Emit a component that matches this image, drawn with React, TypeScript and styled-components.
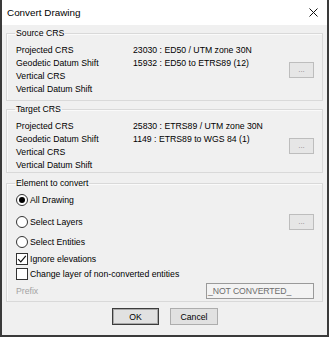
import React from "react";
import styled, { createGlobalStyle } from "styled-components";

const Global = createGlobalStyle`
  html, body { margin: 0; padding: 0; background: #ffffff; }
  body { font-family: "Liberation Sans", Arial, sans-serif; }
  * { box-sizing: border-box; }
`;

const Window = styled.div`
  width: 329px;
  height: 337px;
  border: 2px solid #3a3a3a;
  border-top: none;
  background: #f0f0f0;
  display: flex;
  flex-direction: column;
  font-family: "Liberation Sans", Arial, sans-serif;
  font-size: 8.7px;
  color: #000;
`;

const TitleBar = styled.div`
  height: 25px;
  background: #ffffff;
  display: flex;
  align-items: center;
  justify-content: space-between;
  padding: 0 9px 0 5px;
  flex-shrink: 0;
`;

const Title = styled.span`
  font-size: 9.9px;
  color: #000;
`;

const Body = styled.div`
  flex: 1;
  display: flex;
  flex-direction: column;
  padding: 2px 4px 0 4px;
`;

const Group = styled.fieldset<{ $mt: number; $pt: number; $pb: number }>`
  margin: ${(p) => p.$mt}px 0 0 0;
  padding: ${(p) => p.$pt}px 8px ${(p) => p.$pb}px 9px;
  border: 1px solid #d9d9d9;
  box-shadow: inset 1px 1px 0 #fafafa;
  min-inline-size: 0;
`;

const Legend = styled.legend`
  padding: 0 1px;
  margin-left: -1px;
  line-height: 13px;
  height: 13px;
`;

const CrsGrid = styled.div`
  display: grid;
  grid-template-columns: 117px 1fr 25px;
  grid-auto-rows: 13px;
  line-height: 13px;
`;

const Cell = styled.span<{ $col: number; $row: number }>`
  grid-column: ${(p) => p.$col};
  grid-row: ${(p) => p.$row};
  white-space: nowrap;
`;

const DotsButton = styled.button<{ $span?: boolean }>`
  width: 25px;
  height: 16px;
  padding: 0;
  margin: 0;
  border: 1px solid #bdbdbd;
  background: #e6e6e6;
  color: #8a8a8a;
  font-family: "Liberation Sans", Arial, sans-serif;
  font-size: 8px;
  line-height: 10px;
  display: flex;
  align-items: center;
  justify-content: center;
  ${(p) => (p.$span ? "grid-column: 3; grid-row: 2 / 4; align-self: center;" : "")}
`;

const Options = styled.div`
  display: flex;
  flex-direction: column;
`;

const OptRow = styled.div<{ $h: number; $mt?: number }>`
  height: ${(p) => p.$h}px;
  margin-top: ${(p) => p.$mt ?? 0}px;
  display: flex;
  align-items: center;
  justify-content: space-between;
  white-space: nowrap;
`;

const OptLabel = styled.label<{ $disabled?: boolean }>`
  display: flex;
  align-items: center;
  gap: 2px;
  color: ${(p) => (p.$disabled ? "#a3a3a3" : "#000")};
`;

const RadioCircle = styled.span<{ $on?: boolean }>`
  width: 12px;
  height: 12px;
  border-radius: 50%;
  border: 1px solid #333;
  background: #fff;
  display: inline-flex;
  align-items: center;
  justify-content: center;
  &::after {
    content: "";
    width: 6px;
    height: 6px;
    border-radius: 50%;
    background: ${(p) => (p.$on ? "#000" : "transparent")};
  }
`;

const CheckBox = styled.span`
  width: 12px;
  height: 12px;
  border: 1px solid #333;
  background: #fff;
  display: inline-flex;
  align-items: center;
  justify-content: center;
`;

const TextField = styled.div`
  width: 108px;
  height: 16px;
  border: 1px solid #9a9a9a;
  background: #f3f3f3;
  color: #6d6d6d;
  padding-left: 1px;
  display: flex;
  align-items: center;
  font-size: 8.7px;
  letter-spacing: -0.1px;
`;

const Footer = styled.div`
  display: flex;
  justify-content: center;
  gap: 11px;
  margin-top: 6px;
  padding-left: 1px;
`;

const DialogButton = styled.button<{ $default?: boolean; $w: number }>`
  width: ${(p) => p.$w}px;
  height: 17px;
  margin: 0;
  padding: 0;
  background: #e1e1e1;
  border: 1px solid ${(p) => (p.$default ? "#3c3c3c" : "#adadad")};
  box-shadow: ${(p) => (p.$default ? "inset 0 0 0 1px #a8a8a8" : "none")};
  font-family: "Liberation Sans", Arial, sans-serif;
  font-size: 8.7px;
  color: #000;
`;

const CloseIcon = () => (
  <svg width="9" height="9" viewBox="0 0 9 9" aria-hidden="true">
    <path d="M0.5 0.5 L8.5 8.5 M8.5 0.5 L0.5 8.5" stroke="#111" strokeWidth="1" />
  </svg>
);

const CheckMark = () => (
  <svg width="10" height="10" viewBox="0 0 10 10" aria-hidden="true">
    <path d="M1.2 5.2 L3.8 7.8 L8.8 1.8" fill="none" stroke="#111" strokeWidth="1.2" />
  </svg>
);

type CrsProps = { projected: string; shift: string };

const CrsRows = ({ projected, shift }: CrsProps) => (
  <CrsGrid>
    <Cell $col={1} $row={1}>Projected CRS</Cell>
    <Cell $col={2} $row={1}>{projected}</Cell>
    <Cell $col={1} $row={2}>Geodetic Datum Shift</Cell>
    <Cell $col={2} $row={2}>{shift}</Cell>
    <DotsButton $span>...</DotsButton>
    <Cell $col={1} $row={3}>Vertical CRS</Cell>
    <Cell $col={1} $row={4}>Vertical Datum Shift</Cell>
  </CrsGrid>
);

export default function App() {
  return (
    <>
      <Global />
      <Window>
        <TitleBar>
          <Title>Convert Drawing</Title>
          <CloseIcon />
        </TitleBar>
        <Body>
          <Group $mt={0} $pt={4} $pb={4}>
            <Legend>Source CRS</Legend>
            <CrsRows projected="23030 : ED50 / UTM zone 30N" shift="15932 : ED50 to ETRS89 (12)" />
          </Group>
          <Group $mt={2} $pt={4} $pb={0}>
            <Legend>Target CRS</Legend>
            <CrsRows projected="25830 : ETRS89 / UTM zone 30N" shift="1149 : ETRS89 to WGS 84 (1)" />
          </Group>
          <Group $mt={3.5} $pt={2} $pb={2}>
            <Legend>Element to convert</Legend>
            <Options>
              <OptRow $h={16}>
                <OptLabel><RadioCircle $on />All Drawing</OptLabel>
              </OptRow>
              <OptRow $h={17} $mt={6}>
                <OptLabel><RadioCircle />Select Layers</OptLabel>
                <DotsButton>...</DotsButton>
              </OptRow>
              <OptRow $h={15} $mt={4}>
                <OptLabel><RadioCircle />Select Entities</OptLabel>
              </OptRow>
              <OptRow $h={16} $mt={1}>
                <OptLabel><CheckBox><CheckMark /></CheckBox>Ignore elevations</OptLabel>
              </OptRow>
              <OptRow $h={15}>
                <OptLabel><CheckBox />Change layer of non-converted entities</OptLabel>
              </OptRow>
              <OptRow $h={16} $mt={1.5}>
                <OptLabel $disabled>Prefix</OptLabel>
                <TextField>_NOT CONVERTED_</TextField>
              </OptRow>
            </Options>
          </Group>
          <Footer>
            <DialogButton $default $w={47}>OK</DialogButton>
            <DialogButton $w={48}>Cancel</DialogButton>
          </Footer>
        </Body>
      </Window>
    </>
  );
}
